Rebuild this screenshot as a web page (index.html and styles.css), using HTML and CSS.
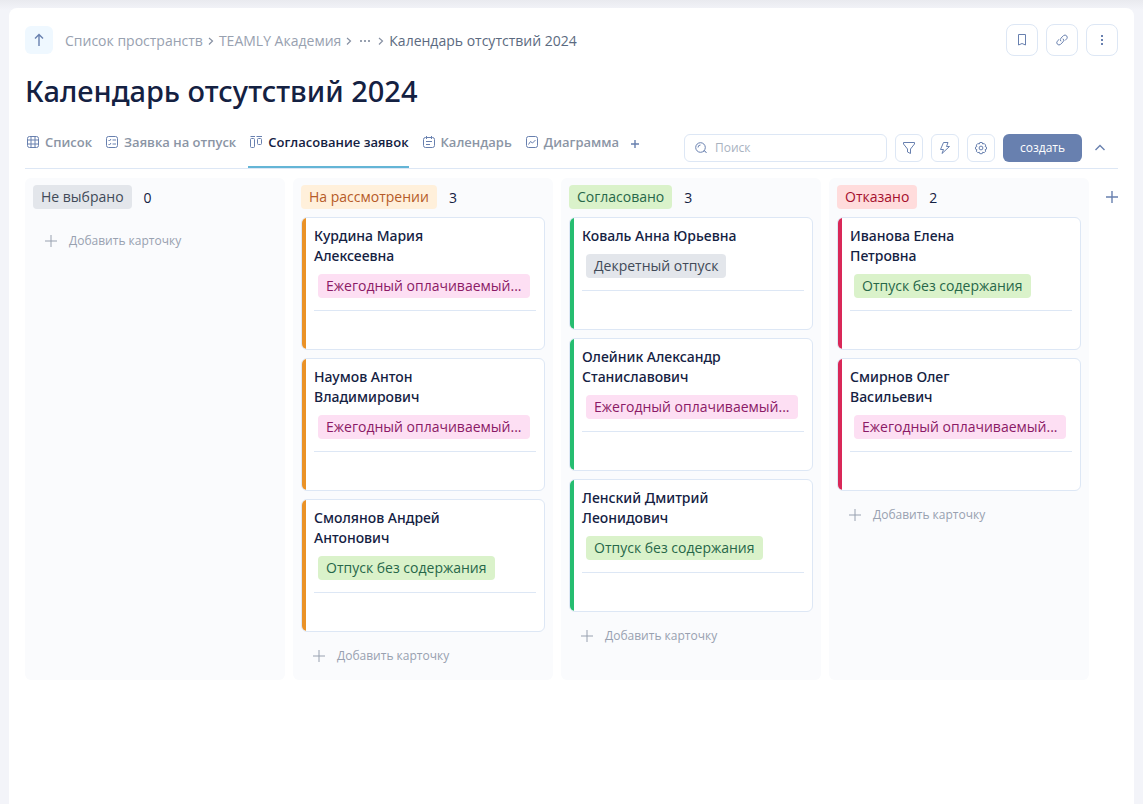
FILE: index.html
```html
<!DOCTYPE html>
<html lang="ru">
<head>
<meta charset="utf-8">
<meta name="viewport" content="width=device-width, initial-scale=1">
<title>Календарь отсутствий 2024</title>
<link rel="stylesheet" href="styles.css">
</head>
<body>
<main class="page">
  <header class="topbar">
    <button class="up" type="button" aria-label="Наверх"><svg class="icon bold" width="16" height="16" viewBox="0 0 16 16"><path d="M8 14V2.500M4 6.500l4-4 4 4"/></svg></button>
    <nav class="crumbs" aria-label="Путь">
      <a href="#">Список пространств</a>
      <svg class="sep" width="6" height="10" viewBox="0 0 6 10"><path d="M1 2l3.500 3L1 8.500"/></svg>
      <a href="#">TEAMLY Академия</a>
      <svg class="sep" width="6" height="10" viewBox="0 0 6 10"><path d="M1 2l3.500 3L1 8.500"/></svg>
      <button class="more" type="button" aria-label="Ещё"><svg width="12" height="4" viewBox="0 0 12 4"><path d="M1 1h2v2H1zM5 1h2v2H5zM9 1h2v2H9z"/></svg></button>
      <svg class="sep" width="6" height="10" viewBox="0 0 6 10"><path d="M1 2l3.500 3L1 8.500"/></svg>
      <a class="current" href="#">Календарь отсутствий 2024</a>
    </nav>
    <div class="page-actions">
      <button class="square large" type="button" aria-label="Закладка"><svg class="icon" width="16" height="16" viewBox="0 0 16 16"><path d="M4.500 2.500h7v10.500L8 11.500 4.500 13z"/></svg></button>
      <button class="square large" type="button" aria-label="Ссылка"><svg class="icon" width="16" height="16" viewBox="0 0 16 16"><path d="M7 9.300a2.300 2.300 0 0 1 0-3.200l2.600-2.600a2.300 2.300 0 0 1 3.200 3.200l-1.800 1.800M9 6.700a2.300 2.300 0 0 1 0 3.200l-2.600 2.600a2.300 2.300 0 0 1-3.200-3.200L5 7.500"/></svg></button>
      <button class="square large" type="button" aria-label="Меню"><svg class="dots" width="16" height="16" viewBox="0 0 16 16"><path d="M7 3h2v2H7zM7 7h2v2H7zM7 11h2v2H7z"/></svg></button>
    </div>
  </header>

  <h1 class="title">Календарь отсутствий 2024</h1>

  <div class="toolbar">
    <nav class="tabs" aria-label="Представления">
      <a class="tab" href="#"><svg class="icon" width="16" height="16" viewBox="0 0 16 16"><rect x="2.500" y="2.500" width="11" height="11" rx="2"/><path d="M6 2.500v11M10 2.500v11M2.500 6h11M2.500 10h11"/></svg>Список</a>
      <a class="tab" href="#"><svg class="icon" width="16" height="16" viewBox="0 0 16 16"><rect x="2.500" y="2.500" width="11" height="11" rx="2"/><path d="M4.500 6l1 1 1.500-2M4.500 10l1 1 1.500-2M8.500 6H12M8.500 10H12"/></svg>Заявка на отпуск</a>
      <a class="tab active" href="#" aria-current="page"><svg class="icon" width="16" height="16" viewBox="0 0 16 16"><path d="M2.500 2.500h4.500M8.500 2.500H14"/><rect x="2.500" y="4.500" width="4" height="9" rx="1"/><rect x="9.500" y="4.500" width="4" height="6" rx="1"/></svg>Согласование заявок</a>
      <a class="tab" href="#"><svg class="icon" width="16" height="16" viewBox="0 0 16 16"><rect x="2.500" y="3.500" width="11" height="10" rx="2"/><path d="M5.500 2v3M10.500 2v3M5 7.500h6M5 10.500h4"/></svg>Календарь</a>
      <a class="tab" href="#"><svg class="icon" width="16" height="16" viewBox="0 0 16 16"><rect x="2.500" y="2.500" width="11" height="11" rx="2"/><path d="M4.500 10.500l2-3 2 1.500L11.500 6"/></svg>Диаграмма</a>
      <button class="add-view" type="button" aria-label="Добавить представление"><svg class="icon bold" width="16" height="16" viewBox="0 0 16 16"><path d="M8 4v8M4 8h8"/></svg></button>
    </nav>
    <div class="tools">
      <label class="search"><svg class="icon" width="16" height="16" viewBox="0 0 16 16"><circle cx="7.500" cy="7.500" r="4.800"/><path d="M5 7.500A2.500 2.500 0 0 1 7.500 5M10.500 12l1-1.500 2 2.500"/></svg><input type="search" placeholder="Поиск" aria-label="Поиск"></label>
      <button class="square" type="button" aria-label="Фильтр"><svg class="icon" width="16" height="16" viewBox="0 0 16 16"><path d="M2.500 2.500h11v1.500L9.500 9v4.500l-3-1.500V9l-4-5z"/></svg></button>
      <button class="square" type="button" aria-label="Автоматизация"><svg class="icon" width="16" height="16" viewBox="0 0 16 16"><path d="M6.500 2.500h4.500L9.500 6.500h3L5 13.500l1.500-4h-3z"/></svg></button>
      <button class="square" type="button" aria-label="Настройки"><svg class="icon" width="16" height="16" viewBox="0 0 16 16"><path d="M6.800 2.500h2.400l.5 1.500 1.500-.5 1.500 1.600-.6 1.400 1.400.6v2l-1.400.6.6 1.500-1.500 1.500-1.500-.5-.5 1.500H6.800l-.5-1.500-1.500.5-1.500-1.500.6-1.500-1.400-.6v-2l1.400-.6-.6-1.400 1.500-1.600 1.500.5z"/><circle cx="8" cy="8" r="1.900"/></svg></button>
      <button class="create" type="button">создать</button>
      <button class="collapse" type="button" aria-label="Свернуть"><svg class="icon bold" width="16" height="16" viewBox="0 0 16 16"><path d="M3.500 10L8 5.500l4.500 4.500"/></svg></button>
    </div>
  </div>

  <div class="board">
    <section class="column">
      <header class="column-head"><h2 class="tag gray">Не выбрано</h2><span class="count">0</span></header>
      <div class="cards"></div>
      <button class="add-card" type="button"><svg class="icon" width="12" height="12" viewBox="0 0 12 12"><path d="M6 0v12M0 6h12"/></svg>Добавить карточку</button>
    </section>

    <section class="column">
      <header class="column-head"><h2 class="tag orange">На рассмотрении</h2><span class="count">3</span></header>
      <div class="cards">
        <article class="card bar-orange"><h3>Курдина Мария Алексеевна</h3><span class="tag pink">Ежегодный оплачиваемый...</span></article>
        <article class="card bar-orange"><h3>Наумов Антон Владимирович</h3><span class="tag pink">Ежегодный оплачиваемый...</span></article>
        <article class="card bar-orange"><h3>Смолянов Андрей Антонович</h3><span class="tag green">Отпуск без содержания</span></article>
      </div>
      <button class="add-card" type="button"><svg class="icon" width="12" height="12" viewBox="0 0 12 12"><path d="M6 0v12M0 6h12"/></svg>Добавить карточку</button>
    </section>

    <section class="column">
      <header class="column-head"><h2 class="tag green">Согласовано</h2><span class="count">3</span></header>
      <div class="cards">
        <article class="card bar-green"><h3>Коваль Анна Юрьевна</h3><span class="tag gray">Декретный отпуск</span></article>
        <article class="card bar-green"><h3>Олейник Александр Станиславович</h3><span class="tag pink">Ежегодный оплачиваемый...</span></article>
        <article class="card bar-green"><h3>Ленский Дмитрий Леонидович</h3><span class="tag green">Отпуск без содержания</span></article>
      </div>
      <button class="add-card" type="button"><svg class="icon" width="12" height="12" viewBox="0 0 12 12"><path d="M6 0v12M0 6h12"/></svg>Добавить карточку</button>
    </section>

    <section class="column">
      <header class="column-head"><h2 class="tag red">Отказано</h2><span class="count">2</span></header>
      <div class="cards">
        <article class="card bar-red"><h3>Иванова Елена Петровна</h3><span class="tag green">Отпуск без содержания</span></article>
        <article class="card bar-red"><h3>Смирнов Олег Васильевич</h3><span class="tag pink">Ежегодный оплачиваемый...</span></article>
      </div>
      <button class="add-card" type="button"><svg class="icon" width="12" height="12" viewBox="0 0 12 12"><path d="M6 0v12M0 6h12"/></svg>Добавить карточку</button>
    </section>

    <button class="add-column" type="button" aria-label="Добавить колонку"><svg class="icon bold" width="12" height="12" viewBox="0 0 12 12"><path d="M6 0v12M0 6h12"/></svg></button>
  </div>
</main>
</body>
</html>
```
FILE: styles.css
```css
* {
  box-sizing: border-box;
}

body {
  margin: 0;
  min-height: 100vh;
  display: flex;
  padding: 8px 9px 0;
  background: linear-gradient(#e9eaef, #f3f4f9 10px);
  color: #142142;
  font: 14px/20px "Open Sans", "Noto Sans", sans-serif;
}

button,
input {
  font: inherit;
  color: inherit;
  margin: 0;
  padding: 0;
  border: 0;
  background: none;
}

button {
  display: flex;
  align-items: center;
  justify-content: center;
  cursor: pointer;
}

a {
  color: inherit;
  text-decoration: none;
}

h1,
h2,
h3 {
  margin: 0;
}

svg {
  flex: none;
}

.icon {
  fill: none;
  stroke: #6880af;
  stroke-width: 1;
}

.icon.bold {
  stroke-width: 1.4;
}

.page {
  flex: 1;
  min-width: 0;
  padding: 16px;
  background: #fff;
  border-radius: 8px 8px 0 0;
}

/* Breadcrumbs and page actions */
.topbar {
  display: flex;
  align-items: center;
  height: 32px;
}

.up {
  width: 28px;
  height: 28px;
  border-radius: 6px;
  background: #eff8ff;
}

.crumbs {
  display: flex;
  align-items: center;
  gap: 5px;
  margin-left: 12px;
  padding-top: 2px;
  color: #98a1b0;
}

.crumbs .current {
  color: #5b6a80;
}

.sep {
  fill: none;
  stroke: #8791a3;
  stroke-width: 1.2;
}

.more {
  width: 16px;
  height: 20px;
}

.more svg {
  fill: #98a1b0;
}

.page-actions {
  display: flex;
  gap: 8px;
  margin-left: auto;
}

.square {
  width: 28px;
  height: 28px;
  border: 1px solid #dde7f5;
  border-radius: 6px;
  background: #fff;
}

.square.large {
  width: 32px;
  height: 32px;
  border-radius: 8px;
}

.dots {
  fill: #6880af;
}

.title {
  margin-top: 16px;
  font-family: "Noto Sans", sans-serif;
  font-size: 29px;
  line-height: 38px;
  font-weight: 500;
}

/* View tabs and tools */
.toolbar {
  display: flex;
  justify-content: space-between;
  margin-top: 18px;
  height: 41px;
  border-bottom: 1px solid #dde7f5;
}

.tabs {
  display: flex;
  gap: 12px;
}

.tab {
  display: flex;
  gap: 4px;
  height: 40px;
  padding-top: 6px;
  color: #8b95a5;
  font-size: 13px;
  line-height: 16px;
  font-weight: 600;
  white-space: nowrap;
}

.tab.active {
  color: #142142;
  border-bottom: 2px solid #64b5d6;
}

.add-view {
  width: 16px;
  height: 32px;
  margin-left: -4px;
}

.tools {
  display: flex;
  gap: 8px;
  padding: 6px 8px 0 0;
}

.search {
  display: flex;
  align-items: center;
  gap: 6px;
  width: 203px;
  height: 28px;
  padding: 0 8px;
  border: 1px solid #dde7f5;
  border-radius: 6px;
}

.search input {
  flex: 1;
  min-width: 0;
  font-size: 12px;
}

.search input::placeholder {
  color: #a9b2bf;
  opacity: 1;
}

.create {
  width: 79px;
  height: 28px;
  border-radius: 6px;
  background: #6880af;
  color: #fff;
  font-size: 12px;
  font-weight: 500;
}

.collapse {
  width: 20px;
  height: 28px;
}

/* Board */
.board {
  display: flex;
  gap: 8px;
  margin-top: 9px;
}

.column {
  flex: 0 0 260px;
  padding: 7px 8px 8px;
  border-radius: 6px;
  background: #fafbfd;
}

.column-head {
  display: flex;
  align-items: center;
  gap: 12px;
  margin-bottom: 8px;
}

.tag {
  display: block;
  width: fit-content;
  max-width: 100%;
  padding: 2px 8px;
  border-radius: 4px;
  font-size: 14px;
  line-height: 20px;
  font-weight: 400;
  white-space: nowrap;
}

.gray {
  background: #e3e6eb;
  color: #414a58;
}

.orange {
  background: #fff0db;
  color: #b65b28;
}

.green {
  background: #daf2ca;
  color: #276749;
}

.pink {
  background: #fddff3;
  color: #8b1a66;
}

.red {
  background: #ffdcdc;
  color: #a50f2d;
}

.count {
  padding-top: 2px;
}

.cards {
  display: grid;
  gap: 8px;
  margin-bottom: 8px;
}

.card {
  display: grid;
  grid-template-columns: 4px minmax(0, 1fr);
  grid-template-rows: auto auto 39px;
  column-gap: 8px;
  padding-right: 8px;
  overflow: hidden;
  border: 1px solid #dde7f5;
  border-radius: 6px;
  background: #fff;
}

.card::before {
  content: "";
  grid-column: 1;
  grid-row: 1 / 4;
}

.card::after {
  content: "";
  grid-column: 2;
  border-top: 1px solid #dde7f5;
}

.card h3 {
  grid-column: 2;
  padding: 8px 48px 8px 0;
  font-family: "Noto Sans", sans-serif;
  font-size: 14px;
  line-height: 20px;
  font-weight: 500;
}

.card .tag {
  grid-column: 2;
  margin: 0 4px 12px;
}

.bar-orange::before {
  background: #ea9227;
}

.bar-green::before {
  background: #26bd70;
}

.bar-red::before {
  background: #d92858;
}

.add-card {
  gap: 12px;
  height: 32px;
  padding: 0 12px;
  color: #98a1b0;
  font-size: 12px;
}

.add-card .icon {
  stroke: #98a1b0;
}

.add-column {
  width: 12px;
  height: 38px;
  margin-left: auto;
}
```
